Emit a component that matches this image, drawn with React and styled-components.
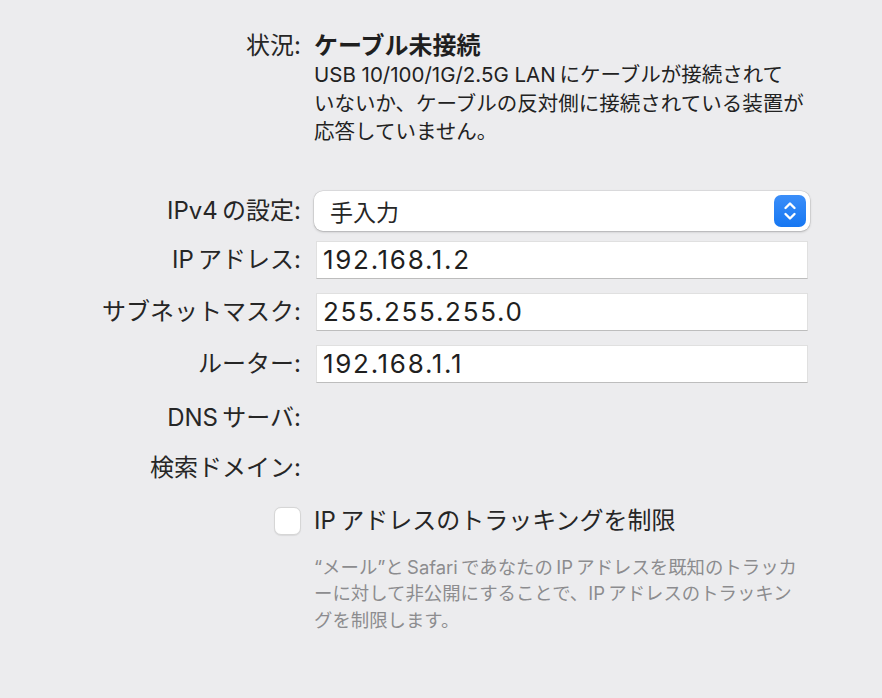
import React from 'react';
import styled, { createGlobalStyle } from 'styled-components';

const GlobalStyles = createGlobalStyle`
  html, body {
    margin: 0;
    padding: 0;
    background: #ececee;
  }
  body {
    font-family: "Inter", "Noto Sans CJK JP", sans-serif;
    color: #262626;
  }
`;

const Page = styled.div`
  width: 882px;
  height: 698px;
  box-sizing: border-box;
  padding-top: 31px;
  overflow: hidden;
`;

const Row = styled.div`
  display: grid;
  grid-template-columns: 301px 496px;
  column-gap: 13px;
  align-items: center;
  margin-top: ${p => p.top || 0}px;
`;

const Label = styled.div`
  text-align: right;
  font-size: 24px;
  line-height: 30px;
  white-space: nowrap;
`;

const Status = styled.div`
  font-size: 24px;
  font-weight: 700;
  line-height: 30px;
  color: #1f1f1f;
`;

const Note = styled.p`
  margin: 0;
  font-size: 20.5px;
  line-height: 28.5px;
  white-space: nowrap;
  color: #222;
`;

const Popup = styled.div`
  height: 40px;
  background: #fff;
  border-radius: 9px;
  box-shadow: 0 0 0 0.5px rgba(0, 0, 0, 0.12), 0 1px 2.5px rgba(0, 0, 0, 0.22);
  display: flex;
  align-items: center;
  justify-content: space-between;
  padding: 0 4px 0 16px;
  font-size: 23px;
`;

const Stepper = styled.div`
  width: 32px;
  height: 32px;
  border-radius: 7px;
  background: linear-gradient(#3b8ef9, #1677f2);
  display: flex;
  align-items: center;
  justify-content: center;
`;

const Field = styled.div`
  height: 38px;
  margin: 0 2px;
  box-sizing: border-box;
  background: #fff;
  border: 1px solid #e0e0e0;
  border-bottom-color: #bdbdbd;
  display: flex;
  align-items: center;
  padding-left: 6px;
  font-size: 26px;
  letter-spacing: 1.7px;
  color: #1f1f1f;
`;

const Check = styled.div`
  justify-self: end;
  width: 27px;
  height: 28px;
  box-sizing: border-box;
  border-radius: 7px;
  background: #fff;
  border: 1px solid #d6d6d6;
  box-shadow: 0 0.5px 1px rgba(0, 0, 0, 0.08);
`;

const CheckText = styled.div`
  font-size: 24px;
  line-height: 30px;
  white-space: nowrap;
`;

const Hint = styled.p`
  margin: 0;
  font-size: 18.4px;
  line-height: 26.5px;
  white-space: nowrap;
  color: #8c8c8f;
`;

const Empty = styled.div``;

const StepperIcon = () => (
  <svg width="16" height="22" viewBox="0 0 16 22" fill="none" stroke="#fff" strokeWidth="2.4" strokeLinecap="round" strokeLinejoin="round">
    <path d="M3.5 8 L8 3.5 L12.5 8" />
    <path d="M3.5 14 L8 18.5 L12.5 14" />
  </svg>
);

const fields = [
  { label: 'IP\u2009アドレス:', value: '192.168.1.2', top: 10 },
  { label: 'サブネットマスク:', value: '255.255.255.0', top: 14 },
  { label: 'ルーター:', value: '192.168.1.1', top: 14 },
];

export default function App() {
  return (
    <Page>
      <GlobalStyles />
      <Row>
        <Label>状況:</Label>
        <Status>ケーブル未接続</Status>
      </Row>
      <Row>
        <Empty />
        <Note>
          USB 10/100/1G/2.5G LAN{'\u2009'}にケーブルが接続されて<br />
          いないか、ケーブルの反対側に接続されている装置が<br />
          応答していません。
        </Note>
      </Row>
      <Row top={44}>
        <Label>IPv4{'\u2009'}の設定:</Label>
        <Popup>
          <span>手入力</span>
          <Stepper>
            <StepperIcon />
          </Stepper>
        </Popup>
      </Row>
      {fields.map(f => (
        <Row key={f.value + f.top} top={f.top}>
          <Label>{f.label}</Label>
          <Field>{f.value}</Field>
        </Row>
      ))}
      <Row top={20}>
        <Label>DNS{'\u2009'}サーバ:</Label>
        <Empty />
      </Row>
      <Row top={20}>
        <Label>検索ドメイン:</Label>
        <Empty />
      </Row>
      <Row top={23}>
        <Check />
        <CheckText>IP{'\u2009'}アドレスのトラッキングを制限</CheckText>
      </Row>
      <Row top={18}>
        <Empty />
        <Hint>
          “メール”と{'\u2009'}Safari{'\u2009'}であなたの{'\u2009'}IP{'\u2009'}アドレスを既知のトラッカ<br />
          ーに対して非公開にすることで、IP{'\u2009'}アドレスのトラッキン<br />
          グを制限します。
        </Hint>
      </Row>
    </Page>
  );
}
